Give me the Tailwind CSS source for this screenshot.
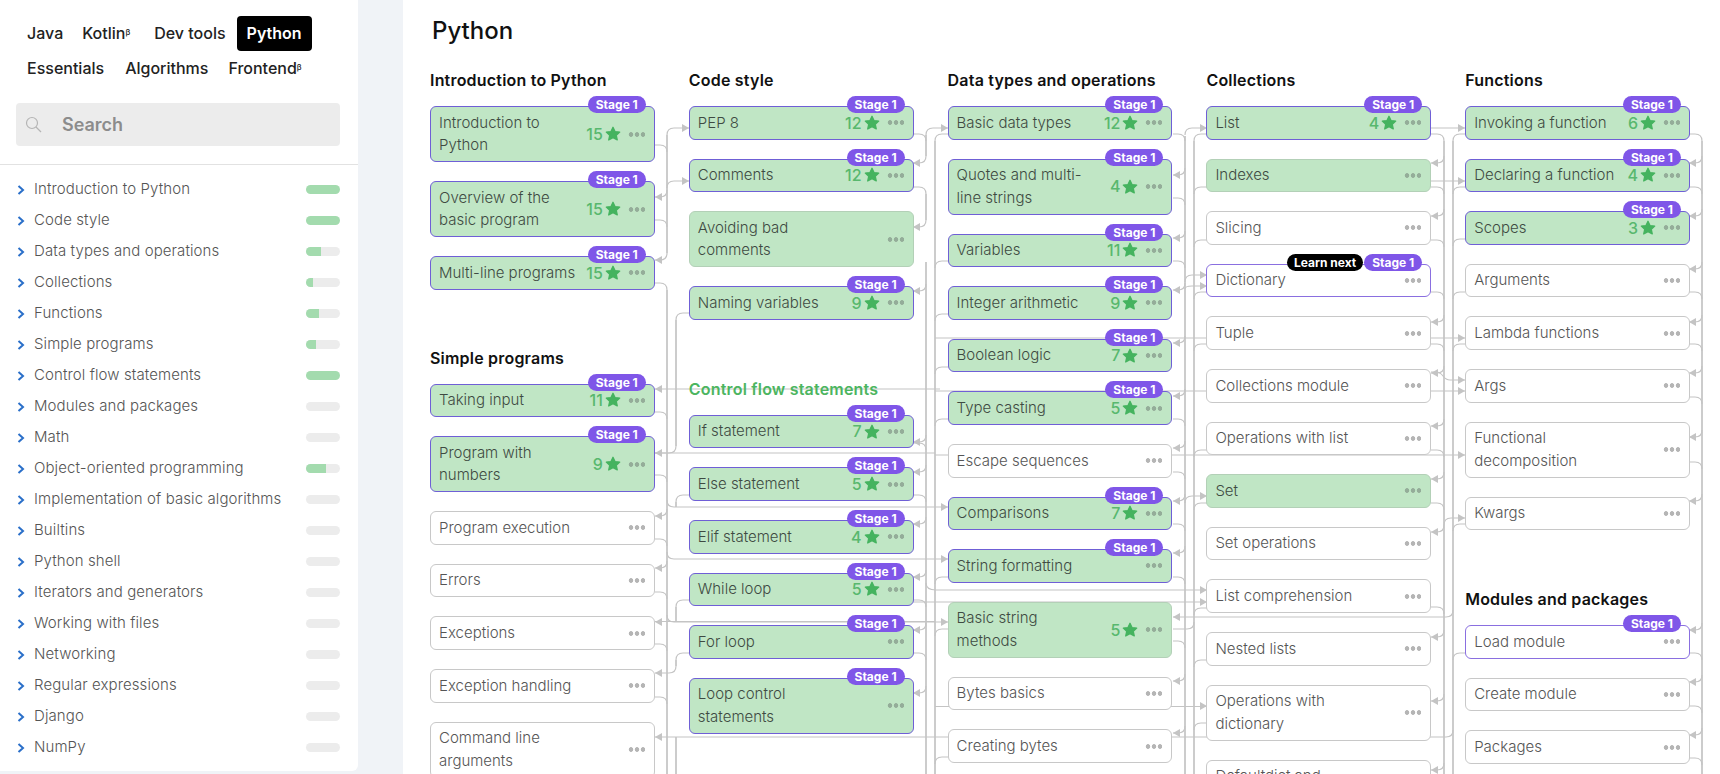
<!DOCTYPE html>
<html><head><meta charset="utf-8"><script src="https://cdn.jsdelivr.net/npm/@tailwindcss/browser@4"></script></head>
<body>
<div class="relative flex h-[774px] w-[1720px] overflow-hidden bg-[#f0f3f7] [font-family:Inter,sans-serif]">
<svg class="absolute h-0 w-0"><defs><symbol id="star" viewBox="0 0 15 15"><path d="M7.5 1.2l1.9 4 4.4.5-3.2 3 .9 4.4-4-2.2-4 2.2.9-4.4-3.2-3 4.4-.5z" fill="currentColor" stroke="currentColor" stroke-width="1.2" stroke-linejoin="round"/></symbol><symbol id="chev" viewBox="0 0 8 10"><path d="M1.5 1l4.5 4-4.5 4" fill="none" stroke="#2a6fc9" stroke-width="2"/></symbol></defs></svg>

<aside class="h-[771px] w-[358px] shrink-0 rounded-br-md bg-white">
  <div class="flex flex-wrap pl-4 pt-4 text-[16px] leading-[35px] font-medium text-[#222]">
    <a class="pl-[11px] pr-[9px]">Java</a><a class="pl-[10px] pr-[14px]">Kotlin<sup class="text-[8px]">β</sup></a><a class="pl-[10px] pr-[11px]">Dev tools</a><a class="rounded bg-black px-[10px] font-semibold text-white">Python</a>
    <a class="px-[11px]">Essentials</a><a class="px-[10px]">Algorithms</a><a class="px-[10px]">Frontend<sup class="text-[8px]">β</sup></a>
  </div>
  <div class="ml-4 mr-[18px] mt-[17px] flex h-[43px] items-center rounded bg-[#ececec] pl-[9px] text-[18px] font-semibold text-[#8c8c8c]">
    <svg class="h-[17px] w-[17px]" viewBox="0 0 17 17" fill="none" stroke="#b5b5b5" stroke-width="1.2"><circle cx="7" cy="7" r="5.5"/><path d="M11 11l5 5"/></svg><span class="ml-[20px]">Search</span>
  </div>
  <ul class="mt-[18px] border-t border-[#e2e2e2] pt-[9px] text-[15px] font-light tracking-[0.1px] text-[#555] [&_li]:flex [&_li]:h-[31px] [&_li]:items-center [&_li]:pl-[17px] [&_li]:pr-[18px] [&_li>svg]:mr-[9px] [&_li>svg]:h-[10px] [&_li>svg]:w-[8px] [&_li>span]:flex-1 [&_li>div]:h-[9px] [&_li>div]:w-[34px] [&_li>div]:overflow-hidden [&_li>div]:rounded-full [&_li>div]:bg-[#ececec]">
    <li><svg><use href="#chev"/></svg><span>Introduction to Python</span><div><div class="h-full w-full bg-[#a3dbae]"></div></div></li>
    <li><svg><use href="#chev"/></svg><span>Code style</span><div><div class="h-full w-full bg-[#a3dbae]"></div></div></li>
    <li><svg><use href="#chev"/></svg><span>Data types and operations</span><div><div class="h-full w-[15px] bg-[#a3dbae]"></div></div></li>
    <li><svg><use href="#chev"/></svg><span>Collections</span><div><div class="h-full w-[7px] bg-[#a3dbae]"></div></div></li>
    <li><svg><use href="#chev"/></svg><span>Functions</span><div><div class="h-full w-[13px] bg-[#a3dbae]"></div></div></li>
    <li><svg><use href="#chev"/></svg><span>Simple programs</span><div><div class="h-full w-[10px] bg-[#a3dbae]"></div></div></li>
    <li><svg><use href="#chev"/></svg><span>Control flow statements</span><div><div class="h-full w-full bg-[#a3dbae]"></div></div></li>
    <li><svg><use href="#chev"/></svg><span>Modules and packages</span><div></div></li>
    <li><svg><use href="#chev"/></svg><span>Math</span><div></div></li>
    <li><svg><use href="#chev"/></svg><span>Object-oriented programming</span><div><div class="h-full w-[20px] bg-[#a3dbae]"></div></div></li>
    <li><svg><use href="#chev"/></svg><span>Implementation of basic algorithms</span><div></div></li>
    <li><svg><use href="#chev"/></svg><span>Builtins</span><div></div></li>
    <li><svg><use href="#chev"/></svg><span>Python shell</span><div></div></li>
    <li><svg><use href="#chev"/></svg><span>Iterators and generators</span><div></div></li>
    <li><svg><use href="#chev"/></svg><span>Working with files</span><div></div></li>
    <li><svg><use href="#chev"/></svg><span>Networking</span><div></div></li>
    <li><svg><use href="#chev"/></svg><span>Regular expressions</span><div></div></li>
    <li><svg><use href="#chev"/></svg><span>Django</span><div></div></li>
    <li><svg><use href="#chev"/></svg><span>NumPy</span><div></div></li>
  </ul>
</aside>

<main class="ml-[45px] flex-1 bg-white pl-[27px] pt-[15px]">
  <h1 class="ml-[2px] h-[31px] text-[24px] leading-[32px] font-medium text-[#111]">Python</h1>
  <div class="mt-[23px] flex gap-[34px] text-[15px] leading-[22.4px] font-light [&_h2]:mb-[15px] [&_h2]:h-[22px] [&_h2]:text-[16px] [&_h2]:font-semibold [&_h2]:tracking-[0.2px] [&_h2]:text-[#111]
    [&_section]:relative [&_section]:z-10 [&_section]:w-[224.8px]
    [&_nav]:flex [&_nav]:flex-col [&_nav]:gap-[19px]
    [&_article]:relative [&_article]:flex [&_article]:items-center [&_article]:rounded-md [&_article]:border [&_article]:py-[4.6px] [&_article]:pl-2 [&_article]:pr-[9px]
    [&_article>span]:flex-1
    [&_b]:mr-[2px] [&_b]:text-[16px] [&_b]:font-medium [&_b]:text-[#58b86e]
    [&_article>svg]:mr-[7px] [&_article>svg]:h-[16px] [&_article>svg]:w-[16px] [&_article>svg]:text-[#45b35f]
    [&_i]:h-[5px] [&_i]:w-[17px] [&_i]:bg-[radial-gradient(circle,currentColor_2px,transparent_2.6px)] [&_i]:bg-[length:6px_5px]
    [&_em]:absolute [&_em]:-top-[11px] [&_em]:right-[8px] [&_em]:rounded-full [&_em]:bg-[#7f56e8] [&_em]:px-[8px] [&_em]:text-[12px] [&_em]:leading-[17px] [&_em]:font-bold [&_em]:text-white [&_em]:not-italic">

  <section>
    <h2>Introduction to Python</h2>
    <nav>
      <article class="border-[#6f5fd6] bg-[#c0e6c5] text-[#3e4a42]"><span>Introduction to<br>Python</span><b>15</b><svg><use href="#star"/></svg><i class="text-[#94ad99]"></i><em>Stage 1</em></article>
      <article class="border-[#6f5fd6] bg-[#c0e6c5] text-[#3e4a42]"><span>Overview of the<br>basic program</span><b>15</b><svg><use href="#star"/></svg><i class="text-[#94ad99]"></i><em>Stage 1</em></article>
      <article class="border-[#6f5fd6] bg-[#c0e6c5] text-[#3e4a42]"><span>Multi-line programs</span><b>15</b><svg><use href="#star"/></svg><i class="text-[#94ad99]"></i><em>Stage 1</em></article>
    </nav>
    <h2 class="mt-[57px]">Simple programs</h2>
    <nav>
      <article class="border-[#6f5fd6] bg-[#c0e6c5] text-[#3e4a42]"><span>Taking input</span><b>11</b><svg><use href="#star"/></svg><i class="text-[#94ad99]"></i><em>Stage 1</em></article>
      <article class="border-[#6f5fd6] bg-[#c0e6c5] text-[#3e4a42]"><span>Program with<br>numbers</span><b>9</b><svg><use href="#star"/></svg><i class="text-[#94ad99]"></i><em>Stage 1</em></article>
      <article class="border-[#c8c8c8] bg-white text-[#555]"><span>Program execution</span><i class="text-[#b5b5b5]"></i></article>
      <article class="border-[#c8c8c8] bg-white text-[#555]"><span>Errors</span><i class="text-[#b5b5b5]"></i></article>
      <article class="border-[#c8c8c8] bg-white text-[#555]"><span>Exceptions</span><i class="text-[#b5b5b5]"></i></article>
      <article class="border-[#c8c8c8] bg-white text-[#555]"><span>Exception handling</span><i class="text-[#b5b5b5]"></i></article>
      <article class="border-[#c8c8c8] bg-white text-[#555]"><span>Command line<br>arguments</span><i class="text-[#b5b5b5]"></i></article>
    </nav>
  </section>

  <section>
    <h2>Code style</h2>
    <nav>
      <article class="border-[#6f5fd6] bg-[#c0e6c5] text-[#3e4a42]"><span>PEP 8</span><b>12</b><svg><use href="#star"/></svg><i class="text-[#94ad99]"></i><em>Stage 1</em></article>
      <article class="border-[#6f5fd6] bg-[#c0e6c5] text-[#3e4a42]"><span>Comments</span><b>12</b><svg><use href="#star"/></svg><i class="text-[#94ad99]"></i><em>Stage 1</em></article>
      <article class="border-[#b3d0b7] bg-[#c0e6c5] text-[#3e4a42]"><span>Avoiding bad<br>comments</span><i class="text-[#94ad99]"></i></article>
      <article class="border-[#6f5fd6] bg-[#c0e6c5] text-[#3e4a42]"><span>Naming variables</span><b>9</b><svg><use href="#star"/></svg><i class="text-[#94ad99]"></i><em>Stage 1</em></article>
    </nav>
    <h2 class="mt-[58px] !text-[#4cb560]">Control flow statements</h2>
    <nav>
      <article class="border-[#6f5fd6] bg-[#c0e6c5] text-[#3e4a42]"><span>If statement</span><b>7</b><svg><use href="#star"/></svg><i class="text-[#94ad99]"></i><em>Stage 1</em></article>
      <article class="border-[#6f5fd6] bg-[#c0e6c5] text-[#3e4a42]"><span>Else statement</span><b>5</b><svg><use href="#star"/></svg><i class="text-[#94ad99]"></i><em>Stage 1</em></article>
      <article class="border-[#6f5fd6] bg-[#c0e6c5] text-[#3e4a42]"><span>Elif statement</span><b>4</b><svg><use href="#star"/></svg><i class="text-[#94ad99]"></i><em>Stage 1</em></article>
      <article class="border-[#6f5fd6] bg-[#c0e6c5] text-[#3e4a42]"><span>While loop</span><b>5</b><svg><use href="#star"/></svg><i class="text-[#94ad99]"></i><em>Stage 1</em></article>
      <article class="border-[#6f5fd6] bg-[#c0e6c5] text-[#3e4a42]"><span>For loop</span><i class="text-[#94ad99]"></i><em>Stage 1</em></article>
      <article class="border-[#6f5fd6] bg-[#c0e6c5] text-[#3e4a42]"><span>Loop control<br>statements</span><i class="text-[#94ad99]"></i><em>Stage 1</em></article>
    </nav>
  </section>

  <section>
    <h2>Data types and operations</h2>
    <nav>
      <article class="border-[#6f5fd6] bg-[#c0e6c5] text-[#3e4a42]"><span>Basic data types</span><b>12</b><svg><use href="#star"/></svg><i class="text-[#94ad99]"></i><em>Stage 1</em></article>
      <article class="border-[#6f5fd6] bg-[#c0e6c5] text-[#3e4a42]"><span>Quotes and multi-<br>line strings</span><b>4</b><svg><use href="#star"/></svg><i class="text-[#94ad99]"></i><em>Stage 1</em></article>
      <article class="border-[#6f5fd6] bg-[#c0e6c5] text-[#3e4a42]"><span>Variables</span><b>11</b><svg><use href="#star"/></svg><i class="text-[#94ad99]"></i><em>Stage 1</em></article>
      <article class="border-[#6f5fd6] bg-[#c0e6c5] text-[#3e4a42]"><span>Integer arithmetic</span><b>9</b><svg><use href="#star"/></svg><i class="text-[#94ad99]"></i><em>Stage 1</em></article>
      <article class="border-[#6f5fd6] bg-[#c0e6c5] text-[#3e4a42]"><span>Boolean logic</span><b>7</b><svg><use href="#star"/></svg><i class="text-[#94ad99]"></i><em>Stage 1</em></article>
      <article class="border-[#6f5fd6] bg-[#c0e6c5] text-[#3e4a42]"><span>Type casting</span><b>5</b><svg><use href="#star"/></svg><i class="text-[#94ad99]"></i><em>Stage 1</em></article>
      <article class="border-[#c8c8c8] bg-white text-[#555]"><span>Escape sequences</span><i class="text-[#b5b5b5]"></i></article>
      <article class="border-[#6f5fd6] bg-[#c0e6c5] text-[#3e4a42]"><span>Comparisons</span><b>7</b><svg><use href="#star"/></svg><i class="text-[#94ad99]"></i><em>Stage 1</em></article>
      <article class="border-[#6f5fd6] bg-[#c0e6c5] text-[#3e4a42]"><span>String formatting</span><i class="text-[#94ad99]"></i><em>Stage 1</em></article>
      <article class="border-[#b3d0b7] bg-[#c0e6c5] text-[#3e4a42]"><span>Basic string<br>methods</span><b>5</b><svg><use href="#star"/></svg><i class="text-[#94ad99]"></i></article>
      <article class="border-[#c8c8c8] bg-white text-[#555]"><span>Bytes basics</span><i class="text-[#b5b5b5]"></i></article>
      <article class="border-[#c8c8c8] bg-white text-[#555]"><span>Creating bytes</span><i class="text-[#b5b5b5]"></i></article>
    </nav>
  </section>

  <section>
    <h2>Collections</h2>
    <nav>
      <article class="border-[#6f5fd6] bg-[#c0e6c5] text-[#3e4a42]"><span>List</span><b>4</b><svg><use href="#star"/></svg><i class="text-[#94ad99]"></i><em>Stage 1</em></article>
      <article class="border-[#b3d0b7] bg-[#c0e6c5] text-[#3e4a42]"><span>Indexes</span><i class="text-[#94ad99]"></i></article>
      <article class="border-[#c8c8c8] bg-white text-[#555]"><span>Slicing</span><i class="text-[#b5b5b5]"></i></article>
      <article class="border-[#8a6fe0] bg-white text-[#555]"><span>Dictionary</span><i class="text-[#b5b5b5]"></i><em class="!right-[67px] !bg-black !px-[7px]">Learn next</em><em>Stage 1</em></article>
      <article class="border-[#c8c8c8] bg-white text-[#555]"><span>Tuple</span><i class="text-[#b5b5b5]"></i></article>
      <article class="border-[#c8c8c8] bg-white text-[#555]"><span>Collections module</span><i class="text-[#b5b5b5]"></i></article>
      <article class="border-[#c8c8c8] bg-white text-[#555]"><span>Operations with list</span><i class="text-[#b5b5b5]"></i></article>
      <article class="border-[#b3d0b7] bg-[#c0e6c5] text-[#3e4a42]"><span>Set</span><i class="text-[#94ad99]"></i></article>
      <article class="border-[#c8c8c8] bg-white text-[#555]"><span>Set operations</span><i class="text-[#b5b5b5]"></i></article>
      <article class="border-[#c8c8c8] bg-white text-[#555]"><span>List comprehension</span><i class="text-[#b5b5b5]"></i></article>
      <article class="border-[#c8c8c8] bg-white text-[#555]"><span>Nested lists</span><i class="text-[#b5b5b5]"></i></article>
      <article class="border-[#c8c8c8] bg-white text-[#555]"><span>Operations with<br>dictionary</span><i class="text-[#b5b5b5]"></i></article>
      <article class="border-[#c8c8c8] bg-white text-[#555]"><span>Defaultdict and</span><i class="text-[#b5b5b5]"></i></article>
    </nav>
  </section>

  <section>
    <h2>Functions</h2>
    <nav>
      <article class="border-[#6f5fd6] bg-[#c0e6c5] text-[#3e4a42]"><span>Invoking a function</span><b>6</b><svg><use href="#star"/></svg><i class="text-[#94ad99]"></i><em>Stage 1</em></article>
      <article class="border-[#6f5fd6] bg-[#c0e6c5] text-[#3e4a42]"><span>Declaring a function</span><b>4</b><svg><use href="#star"/></svg><i class="text-[#94ad99]"></i><em>Stage 1</em></article>
      <article class="border-[#6f5fd6] bg-[#c0e6c5] text-[#3e4a42]"><span>Scopes</span><b>3</b><svg><use href="#star"/></svg><i class="text-[#94ad99]"></i><em>Stage 1</em></article>
      <article class="border-[#c8c8c8] bg-white text-[#555]"><span>Arguments</span><i class="text-[#b5b5b5]"></i></article>
      <article class="border-[#c8c8c8] bg-white text-[#555]"><span>Lambda functions</span><i class="text-[#b5b5b5]"></i></article>
      <article class="border-[#c8c8c8] bg-white text-[#555]"><span>Args</span><i class="text-[#b5b5b5]"></i></article>
      <article class="border-[#c8c8c8] bg-white text-[#555]"><span>Functional<br>decomposition</span><i class="text-[#b5b5b5]"></i></article>
      <article class="border-[#c8c8c8] bg-white text-[#555]"><span>Kwargs</span><i class="text-[#b5b5b5]"></i></article>
    </nav>
    <h2 class="mt-[58px]">Modules and packages</h2>
    <nav>
      <article class="border-[#8a6fe0] bg-white text-[#555]"><span>Load module</span><i class="text-[#b5b5b5]"></i><em>Stage 1</em></article>
      <article class="border-[#c8c8c8] bg-white text-[#555]"><span>Create module</span><i class="text-[#b5b5b5]"></i></article>
      <article class="border-[#c8c8c8] bg-white text-[#555]"><span>Packages</span><i class="text-[#b5b5b5]"></i></article>
    </nav>
  </section>
  </div>
</main>

<svg class="absolute left-0 top-0 h-[774px] w-[1720px]" viewBox="0 0 1720 774" fill="none" stroke="#c4c4c4" stroke-width="1.2">
<path d="M667 135V253M667 290V774M676 320V446M676 502V507M676 607V622M676 660V666M676 737V774M926 135V156M926 194V220M926 262V774M935 141V774M1185 136V774M1194 141V774M1444 141V774M1453 141V774M1702 141V774" stroke-width="1.7"/>
<path d="M655 145h5q7 0 7 7M655 220h5q7 0 7 7M655 283h5q7 0 7 7M655 412h5q7 0 7 7M655 475h5q7 0 7 7M655 539h5q7 0 7 7M655 592h5q7 0 7 7M655 644h5q7 0 7 7M655 697h5q7 0 7 7"/>
<path d="M667 190q0 7-7 7h-5M667 253q0 7-7 7h-5M667 509q0 7-7 7h-5M667 561q0 7-7 7h-5M676 446q0 7-7 7h-14M676 666q0 7-7 7h-14"/>
<path d="M667 135q0-7 7-7h15M667 188q0-7 7-7h15M689 313h-6q-7 0-7 7M689 495h-6q-7 0-7 7M689 600h-6q-7 0-7 7M689 653h-6q-7 0-7 7"/>
<path d="M667 500q0 7 7 7H948M667 552q0 7 7 7H948M667 615q0 7 7 7H948M940 389H655M935 453H655M935 621.5H655M1453 730q0 7-7 7H655"/>
<path d="M913 134h6q7 0 7 7M913 187h6q7 0 7 7M913 443h6q7 0 7 7M913 495h6q7 0 7 7M913 600h6q7 0 7 7M913 653h6q7 0 7 7"/>
<path d="M926 156q0 7-7 7h-6M926 220q0 7-7 7h-6M926 284q0 7-7 7h-6M926 435q0 7-7 7h-6M926 465q0 7-7 7h-6M926 517q0 7-7 7h-6M926 570q0 7-7 7h-6M926 623q0 7-7 7h-6M926 686q0 7-7 7h-6M926 135q0-7 7-7h15"/>
<path d="M948 134h-6q-7 0-7 7M948 261h-6q-7 0-7 7M948 314h-6q-7 0-7 7M948 367h-6q-7 0-7 7M948 419h-6q-7 0-7 7M948 577h-6q-7 0-7 7M948 629h-6q-7 0-7 7M948 757h-6q-7 0-7 7"/>
<path d="M1173 134h5q7 0 7 7M1173 198h5q7 0 7 7M1173 261h5q7 0 7 7M1173 419h5q7 0 7 7M1173 472h5q7 0 7 7M1173 524h5q7 0 7 7M1173 577h5q7 0 7 7M1173 641h5q7 0 7 7M1173 629h14q7 0 7-7"/>
<path d="M1185 168q0 7-7 7h-5M1185 231q0 7-7 7h-5M1185 283q0 7-7 7h-5M1185 336q0 7-7 7h-5M1185 389q0 7-7 7h-5M1185 441q0 7-7 7h-5M1185 494q0 7-7 7h-5M1185 546q0 7-7 7h-5M1185 674q0 7-7 7h-5M1185 726q0 7-7 7h-5"/>
<path d="M1185 135q0-7 7-7h15M1185 282q0-7 7-7h15M1185 289q0-3 7-3h15M1185 503q0-7 7-7h15M926 583q0 7 10 7H1207M913 602H1207M935 706.5H1207M1453 610q0 7-7 7H1173"/>
<path d="M1207 134h-6q-7 0-7 7M1207 187h-6q-7 0-7 7M1207 240h-6q-7 0-7 7M1207 292h-6q-7 0-7 7M1207 344h-6q-7 0-7 7M1207 450h-6q-7 0-7 7M1207 503h-6q-7 0-7 7M1207 608h-6q-7 0-7 7M1207 660h-6q-7 0-7 7M1207 723h-6q-7 0-7 7"/>
<path d="M1431 134h6q7 0 7 7M1431 187h6q7 0 7 7M1431 240h6q7 0 7 7M1431 292h6q7 0 7 7M1431 344h6q7 0 7 7M1431 450h6q7 0 7 7M1431 503h6q7 0 7 7M1431 607h6q7 0 7 7"/>
<path d="M1444 156q0 7-7 7h-6M1444 209q0 7-7 7h-6M1444 315q0 7-7 7h-6M1444 366q0 7-7 7h-6M1444 419q0 7-7 7h-6M1444 472q0 7-7 7h-6M1444 525q0 7-7 7h-6M1444 630q0 7-7 7h-6M1444 694q0 7-7 7h-6M1444 763q0 7-7 7h-6"/>
<path d="M1431 128H1465M1431 181H1465M935 338H1465M1431 372h5q4 0 7 4t7 4H1465M935 391H1465M935 455H1465M1444 525q0-7 7-7H1465"/>
<path d="M1465 134h-5q-7 0-7 7M1465 187h-5q-7 0-7 7M1465 239h-5q-7 0-7 7M1465 292h-5q-7 0-7 7M1465 344h-5q-7 0-7 7M1465 524h-5q-7 0-7 7M1465 653h-5q-7 0-7 7"/>
<path d="M1689 134h6q7 0 7 7M1689 187h6q7 0 7 7M1689 292h6q7 0 7 7M1689 344h6q7 0 7 7M1689 397h6q7 0 7 7M1689 462h6q7 0 7 7M1689 653h6q7 0 7 7M1689 706h6q7 0 7 7M1689 758h6q7 0 7 7"/>
<path d="M1702 156q0 7-7 7h-6M1702 209q0 7-7 7h-6M1702 262q0 7-7 7h-6M1702 315q0 7-7 7h-6M1702 366q0 7-7 7h-6M1702 430q0 7-7 7h-6M1702 494q0 7-7 7h-6M1702 623q0 7-7 7h-6M1702 675q0 7-7 7h-6M1702 728q0 7-7 7h-6"/>
<path stroke="none" fill="#c4c4c4" d="M655 197l7-4v8zM655 260l7-4v8zM655 389l7-4v8zM655 453l7-4v8zM655 516l7-4v8zM655 568l7-4v8zM655 622l7-4v8zM655 673l7-4v8zM655 737l7-4v8zM913 163l7-4v8zM913 227l7-4v8zM913 291l7-4v8zM913 442l7-4v8zM913 472l7-4v8zM913 524l7-4v8zM913 577l7-4v8zM913 630l7-4v8zM913 693l7-4v8zM1173 175l7-4v8zM1173 238l7-4v8zM1173 290l7-4v8zM1173 343l7-4v8zM1173 396l7-4v8zM1173 448l7-4v8zM1173 501l7-4v8zM1173 553l7-4v8zM1173 617l7-4v8zM1173 681l7-4v8zM1173 733l7-4v8zM1431 163l7-4v8zM1431 216l7-4v8zM1431 322l7-4v8zM1431 373l7-4v8zM1431 426l7-4v8zM1431 479l7-4v8zM1431 532l7-4v8zM1431 637l7-4v8zM1431 701l7-4v8zM1431 770l7-4v8zM1689 163l7-4v8zM1689 216l7-4v8zM1689 269l7-4v8zM1689 322l7-4v8zM1689 373l7-4v8zM1689 437l7-4v8zM1689 501l7-4v8zM1689 630l7-4v8zM1689 682l7-4v8zM1689 735l7-4v8zM689 128l-7-4v8zM689 181l-7-4v8zM948 128l-7-4v8zM948 507l-7-4v8zM948 559l-7-4v8zM948 622l-7-4v8zM1207 128l-7-4v8zM1207 275l-7-4v8zM1207 286l-7-4v8zM1207 496l-7-4v8zM1207 590l-7-4v8zM1207 602l-7-4v8zM1207 706l-7-4v8zM1465 128l-7-4v8zM1465 181l-7-4v8zM1465 338l-7-4v8zM1465 380l-7-4v8zM1465 391l-7-4v8zM1465 455l-7-4v8zM1465 518l-7-4v8z"/>
</svg>
</div>
</body></html>
